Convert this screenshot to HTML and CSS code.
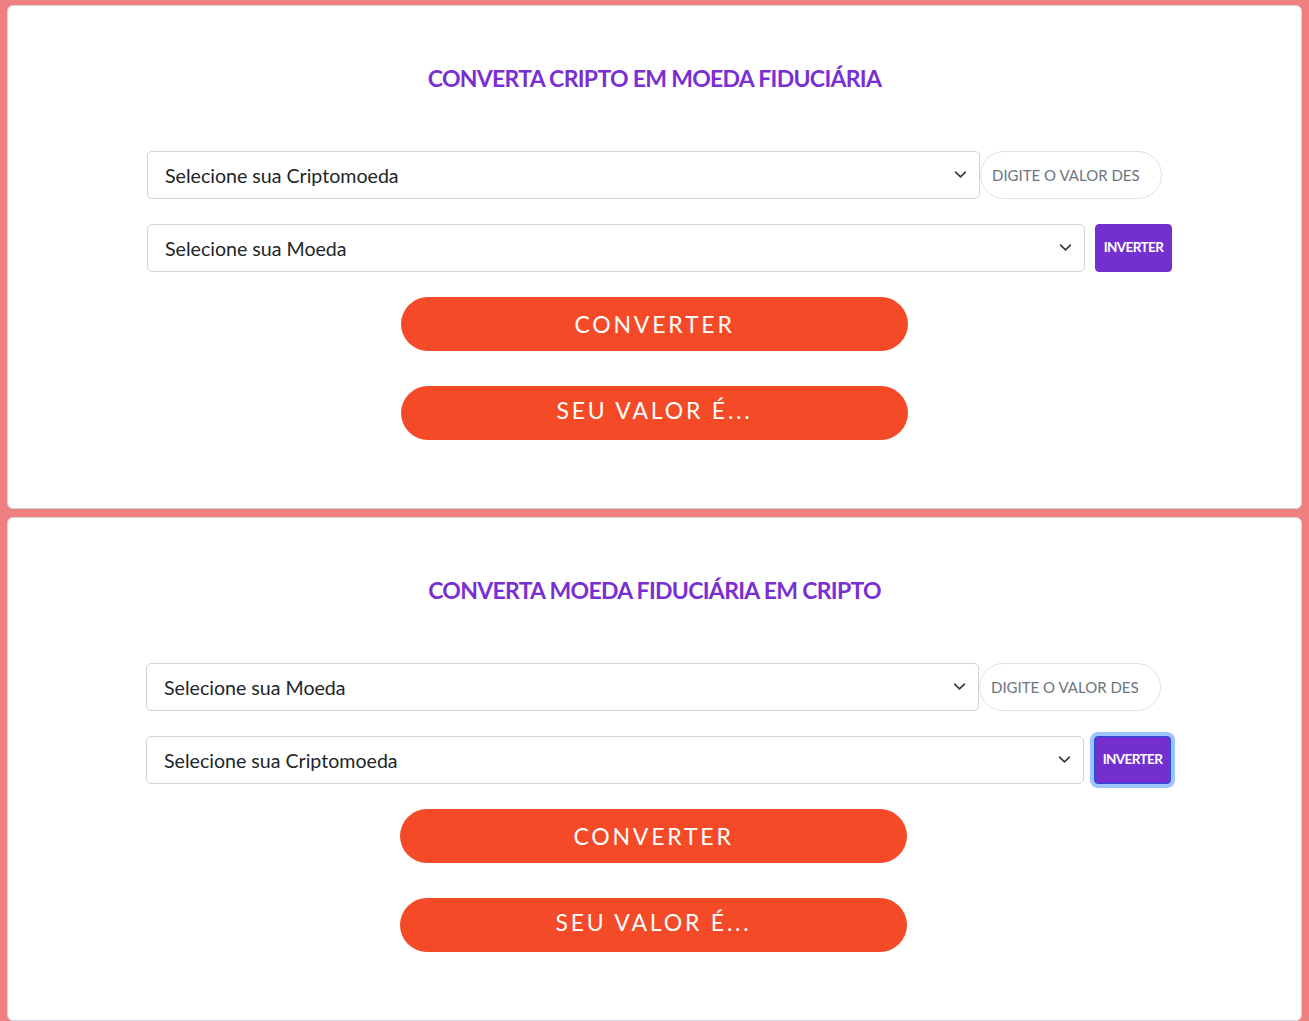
FILE: index.html
```html
<!DOCTYPE html>
<html lang="pt-BR">
<head>
<meta charset="utf-8">
<title>Conversor</title>
<link rel="stylesheet" href="styles.css">
</head>
<body>
<section class="card">
  <h2 class="title">CONVERTA CRIPTO EM MOEDA FIDUCIÁRIA</h2>
  <div class="form">
    <div class="row">
      <div class="select-wrap wide-a">
        <select class="select"><option>Selecione sua Criptomoeda</option></select>
        <svg class="chev" width="16" height="16" viewBox="0 0 16 16"><path d="M2 5l6 6 6-6" fill="none" stroke="#343a40" stroke-width="2" stroke-linecap="round" stroke-linejoin="round"/></svg>
      </div>
      <input class="value" type="text" placeholder="DIGITE O VALOR DESEJADO">
    </div>
    <div class="row row2">
      <div class="select-wrap wide-b">
        <select class="select"><option>Selecione sua Moeda</option></select>
        <svg class="chev" width="16" height="16" viewBox="0 0 16 16"><path d="M2 5l6 6 6-6" fill="none" stroke="#343a40" stroke-width="2" stroke-linecap="round" stroke-linejoin="round"/></svg>
      </div>
      <button class="invert">INVERTER</button>
    </div>
  </div>
  <button class="pill">CONVERTER</button>
  <button class="pill result">SEU VALOR É...</button>
</section>
<section class="card second">
  <h2 class="title">CONVERTA MOEDA FIDUCIÁRIA EM CRIPTO</h2>
  <div class="form">
    <div class="row">
      <div class="select-wrap wide-a">
        <select class="select"><option>Selecione sua Moeda</option></select>
        <svg class="chev" width="16" height="16" viewBox="0 0 16 16"><path d="M2 5l6 6 6-6" fill="none" stroke="#343a40" stroke-width="2" stroke-linecap="round" stroke-linejoin="round"/></svg>
      </div>
      <input class="value" type="text" placeholder="DIGITE O VALOR DESEJADO">
    </div>
    <div class="row row2">
      <div class="select-wrap wide-b">
        <select class="select"><option>Selecione sua Criptomoeda</option></select>
        <svg class="chev" width="16" height="16" viewBox="0 0 16 16"><path d="M2 5l6 6 6-6" fill="none" stroke="#343a40" stroke-width="2" stroke-linecap="round" stroke-linejoin="round"/></svg>
      </div>
      <button class="invert focused">INVERTER</button>
    </div>
  </div>
  <button class="pill">CONVERTER</button>
  <button class="pill result">SEU VALOR É...</button>
</section>
</body>
</html>
```
FILE: styles.css
```css
* { box-sizing: border-box; }
html, body { margin: 0; }
body {
  background: #f08080;
  padding: 5px 7px 0;
  font-family: "Lato", "Inter", sans-serif;
  overflow: hidden;
}
.card {
  background: #fff;
  border: 1px solid #d4d4dc;
  border-radius: 6px;
  height: 504px;
  margin-bottom: 8px;
  padding-top: 59px;
  display: flex;
  flex-direction: column;
  align-items: center;
}
.title {
  margin: 0;
  color: #7a2fd2;
  font-size: 23px;
  font-weight: 700;
  letter-spacing: -0.7px;
  line-height: 26px;
  text-align: center;
}
.form {
  align-self: flex-start;
  margin-left: 139px;
  margin-top: 60px;
  display: flex;
  flex-direction: column;
  gap: 25px;
}
.second .form { margin-left: 138px; }
.second .pill { margin-right: 2px; }
.row { display: flex; align-items: center; }
.select-wrap { position: relative; height: 48px; }
.wide-a { width: 833px; }
.wide-b { width: 938px; }
.select {
  appearance: none;
  -webkit-appearance: none;
  width: 100%;
  height: 48px;
  border: 1px solid #ced4da;
  border-radius: 5px;
  background: #fff;
  padding: 0 40px 0 17px;
  font-family: "Lato", "Inter", sans-serif;
  font-size: 19.6px;
  color: #212529;
}
.chev {
  position: absolute;
  right: 13px;
  top: 17px;
  width: 13px;
  height: 13px;
}
.value {
  width: 182px;
  height: 48px;
  border: 1px solid #dee2e6;
  border-radius: 24px;
  padding: 0 21px 0 11px;
  font-family: "Lato", "Inter", sans-serif;
  font-size: 15px;
  background: #fff;
}
.value::placeholder { color: #6c757d; }
.invert {
  margin-left: 10px;
  width: 77px;
  height: 48px;
  background: #7430cf;
  color: #fff;
  border: 1px solid #7430cf;
  border-radius: 4px;
  font-family: "Lato", sans-serif;
  font-weight: 700;
  font-size: 13.5px;
  letter-spacing: -0.6px;
  padding: 0 0 3px;
}
.invert.focused {
  border-color: #1f4fd8;
  box-shadow: 0 0 0 4px #9ec5fe;
}
.pill {
  margin-top: 25px;
  width: 507px;
  height: 54px;
  background: #f44a27;
  color: #fff;
  border: none;
  border-radius: 27px;
  font-family: "Lato", sans-serif;
  font-size: 23px;
  letter-spacing: 2.8px;
  padding: 0;
}
.pill.result { margin-top: 35px; padding-bottom: 6px; }
```
